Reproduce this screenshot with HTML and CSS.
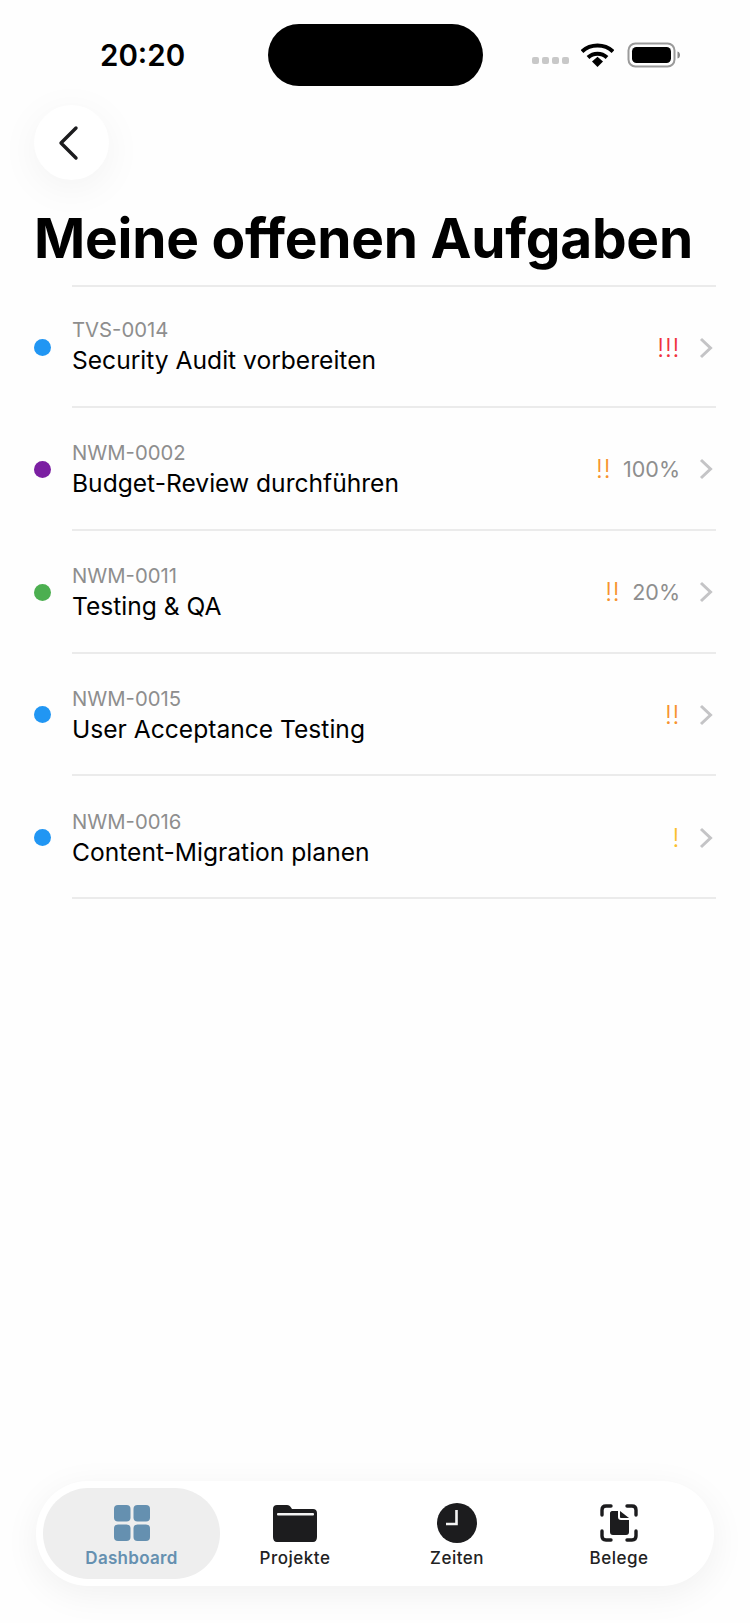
FILE: index.html
```html
<!DOCTYPE html>
<html lang="de">
<head>
    <meta charset="UTF-8">
    <meta name="viewport" content="width=device-width, initial-scale=1.0">
    <title>Meine offenen Aufgaben</title>
    <link rel="stylesheet" href="styles.css">
</head>
<body>
    <div class="status-bar">
        <span class="status-time">20:20</span>
        <div class="island"></div>
        <div class="status-icons">
            <div class="signal"><i></i><i></i><i></i><i></i></div>
            <svg class="wifi" width="33" height="24" viewBox="0 0 33 24">
                <path d="M1 8.500C9.500 0.500 23.500 0.500 32 8.500" fill="none" stroke="#000" stroke-width="4"/>
                <path d="M7 14.500C12.500 9.500 20.500 9.500 26 14.500" fill="none" stroke="#000" stroke-width="4"/>
                <path d="M11 18.500L16.500 13.800L22 18.500L16.500 24Z" fill="#000"/>
            </svg>
            <svg class="battery" width="54" height="26" viewBox="0 0 54 26">
                <rect x="1.500" y="1.500" width="46" height="23" rx="7" fill="none" stroke="#9a9a9a" stroke-width="2"/>
                <rect x="5" y="5" width="39" height="16" rx="4.500" fill="#000"/>
                <path d="M50.500 9.500C52.500 10 53 11.500 53 13C53 14.500 52.500 16 50.500 16.500Z" fill="#8a8a8a"/>
            </svg>
        </div>
    </div>

    <main class="content">
        <button class="back-btn">
            <svg width="24" height="36" viewBox="0 0 24 36">
                <path d="M20 3L5 18L20 33" fill="none" stroke="#1c1c1e" stroke-width="3.400" stroke-linecap="round" stroke-linejoin="round"/>
            </svg>
        </button>
        <h1 class="page-title">Meine offenen Aufgaben</h1>

        <ul class="task-list">
            <li class="task">
                <span class="dot dot-blue"></span>
                <div class="task-text">
                    <div class="task-code">TVS-0014</div>
                    <div class="task-name">Security Audit vorbereiten</div>
                </div>
                <span class="prio prio-high">!!!</span>
                <svg class="chevron" width="16" height="24" viewBox="0 0 16 24"><path d="M3 3L12.500 12L3 21" fill="none" stroke="#c4c4c6" stroke-width="3"/></svg>
            </li>
            <li class="task">
                <span class="dot dot-purple"></span>
                <div class="task-text">
                    <div class="task-code">NWM-0002</div>
                    <div class="task-name">Budget-Review durchführen</div>
                </div>
                <span class="prio prio-mid">!!</span>
                <span class="percent">100%</span>
                <svg class="chevron" width="16" height="24" viewBox="0 0 16 24"><path d="M3 3L12.500 12L3 21" fill="none" stroke="#c4c4c6" stroke-width="3"/></svg>
            </li>
            <li class="task">
                <span class="dot dot-green"></span>
                <div class="task-text">
                    <div class="task-code">NWM-0011</div>
                    <div class="task-name">Testing &amp; QA</div>
                </div>
                <span class="prio prio-mid">!!</span>
                <span class="percent">20%</span>
                <svg class="chevron" width="16" height="24" viewBox="0 0 16 24"><path d="M3 3L12.500 12L3 21" fill="none" stroke="#c4c4c6" stroke-width="3"/></svg>
            </li>
            <li class="task">
                <span class="dot dot-blue"></span>
                <div class="task-text">
                    <div class="task-code">NWM-0015</div>
                    <div class="task-name">User Acceptance Testing</div>
                </div>
                <span class="prio prio-mid">!!</span>
                <svg class="chevron" width="16" height="24" viewBox="0 0 16 24"><path d="M3 3L12.500 12L3 21" fill="none" stroke="#c4c4c6" stroke-width="3"/></svg>
            </li>
            <li class="task">
                <span class="dot dot-blue"></span>
                <div class="task-text">
                    <div class="task-code">NWM-0016</div>
                    <div class="task-name">Content-Migration planen</div>
                </div>
                <span class="prio prio-low">!</span>
                <svg class="chevron" width="16" height="24" viewBox="0 0 16 24"><path d="M3 3L12.500 12L3 21" fill="none" stroke="#c4c4c6" stroke-width="3"/></svg>
            </li>
        </ul>
    </main>

    <nav class="tab-bar">
        <a class="tab tab-active">
            <svg width="36" height="40" viewBox="0 0 36 40" fill="#6590b0">
                <rect x="0" y="2" width="16.500" height="16.500" rx="4"/>
                <rect x="19.500" y="2" width="16.500" height="16.500" rx="4"/>
                <rect x="0" y="21.500" width="16.500" height="16.500" rx="4"/>
                <rect x="19.500" y="21.500" width="16.500" height="16.500" rx="4"/>
            </svg>
            <span>Dashboard</span>
        </a>
        <a class="tab">
            <svg width="44" height="40" viewBox="0 0 44 40">
                <path d="M4 2H14C16 2 17 3 18 4.500L19 6H40C42.500 6 44 7.500 44 10V34C44 37 42.500 39 40 39H4C1.500 39 0 37 0 34V6C0 3.500 1.500 2 4 2Z" fill="#1c1c1e"/>
                <rect x="4" y="10" width="37" height="2.500" rx="1" fill="#f4f4f4"/>
            </svg>
            <span>Projekte</span>
        </a>
        <a class="tab">
            <svg width="40" height="40" viewBox="0 0 40 40">
                <circle cx="20" cy="20" r="20" fill="#1c1c1e"/>
                <path d="M19.500 7V21H9" fill="none" stroke="#f4f4f4" stroke-width="2.600"/>
            </svg>
            <span>Zeiten</span>
        </a>
        <a class="tab">
            <svg width="40" height="40" viewBox="0 0 40 40">
                <path d="M3 12V7C3 4.500 4.500 3 7 3H12M28 3H33C35.500 3 37 4.500 37 7V12M37 28V33C37 35.500 35.500 37 33 37H28M12 37H7C4.500 37 3 35.500 3 33V28" fill="none" stroke="#1c1c1e" stroke-width="3.400" stroke-linecap="round"/>
                <path d="M11 10C11 9 12 8 13 8H19V14C19 16 20 17 22 17H30V29C30 31 29 32 27 32H14C12 32 11 31 11 29Z" fill="#1c1c1e"/>
                <path d="M21 8L30 15H22C21.500 15 21 14.500 21 14Z" fill="#1c1c1e"/>
            </svg>
            <span>Belege</span>
        </a>
    </nav>
</body>
</html>
```

FILE: styles.css
```css
* {
    margin: 0;
    padding: 0;
    box-sizing: border-box;
}

body {
    width: 750px;
    height: 1623px;
    display: flex;
    flex-direction: column;
    font-family: "Inter", "Liberation Sans", sans-serif;
    color: #000;
    background: #fefefe;
    overflow: hidden;
}

.status-bar {
    height: 105px;
    display: flex;
    align-items: flex-start;
    padding: 24px 0 0 100px;
    flex-shrink: 0;
}

.status-time {
    width: 168px;
    padding-top: 13px;
    font-size: 29.500px;
    line-height: 37px;
    font-weight: 600;
    color: #000;
}

.island {
    width: 215px;
    height: 62px;
    background: #000;
    border-radius: 31px;
}

.status-icons {
    display: flex;
    align-items: center;
    margin: 18px 0 0 49px;
}

.signal {
    display: flex;
    gap: 3px;
    margin: 10px 12px 0 0;
}

.signal i {
    width: 7px;
    height: 7px;
    border-radius: 2px;
    background: #c8c8c8;
}

.wifi {
    margin-right: 13px;
}

.content {
    flex: 1;
    padding-left: 34px;
}

.back-btn {
    display: flex;
    align-items: center;
    justify-content: center;
    width: 75px;
    height: 75px;
    border: none;
    border-radius: 50%;
    background: #fff;
    box-shadow: 0 8px 40px rgba(0, 0, 0, 0.05);
    padding-right: 8px;
}

.page-title {
    margin-top: 26px;
    font-size: 55px;
    line-height: 64px;
    font-weight: 700;
    letter-spacing: -0.25px;
    white-space: nowrap;
}

.task-list {
    list-style: none;
    margin-top: 15px;
    border-top: 2px solid #ebebeb;
    margin-left: 38px;
    width: 644px;
}

.task {
    display: flex;
    align-items: center;
    height: 122.800px;
    padding-top: 2px;
    border-bottom: 2px solid #ebebeb;
}

.task:first-child {
    height: 121px;
}

.task:first-child .task-text {
    padding-bottom: 4px;
}

.dot {
    width: 17px;
    height: 17px;
    margin: 0 21px 0 -38px;
    border-radius: 50%;
    flex-shrink: 0;
}

.dot-blue {
    background: #2196f3;
}

.dot-purple {
    background: #7b1fa2;
}

.dot-green {
    background: #4caf50;
}

.task-text {
    flex: 1;
}

.task-code {
    font-size: 20.300px;
    line-height: 27px;
    color: #8e8e8e;
}

.task-name {
    margin-top: 1px;
    font-size: 24.600px;
    line-height: 32px;
    color: #000;
}

.prio {
    font-size: 26px;
    line-height: 28px;
    font-weight: 300;
    letter-spacing: 0.3px;
}

.prio-high {
    color: #f0323c;
}

.prio-mid {
    color: #f7932e;
}

.prio-low {
    color: #fbc02d;
}

.percent {
    margin-left: 12px;
    font-size: 21.500px;
    color: #8e8e8e;
}

.chevron {
    margin: 0 2px 0 18px;
}

.tab-bar {
    display: grid;
    grid-template-columns: repeat(4, 162px);
    align-items: center;
    width: 678px;
    height: 105px;
    margin: 0 0 37px 36px;
    padding: 0 16px;
    border-radius: 52px;
    background: #fff;
    box-shadow: 0 8px 36px rgba(0, 0, 0, 0.06);
    flex-shrink: 0;
}

.tab {
    display: flex;
    flex-direction: column;
    align-items: center;
    justify-content: center;
    gap: 5px;
    height: 91px;
    padding-top: 4px;
    font-size: 17px;
    line-height: 21px;
    font-weight: 500;
    letter-spacing: 0.5px;
    color: #222;
}

.tab-active {
    margin: 0 -6px 0 -9px;
    border-radius: 46px;
    background: #eeeeee;
    color: #6590b0;
    font-weight: 600;
    letter-spacing: 0.3px;
}
```
